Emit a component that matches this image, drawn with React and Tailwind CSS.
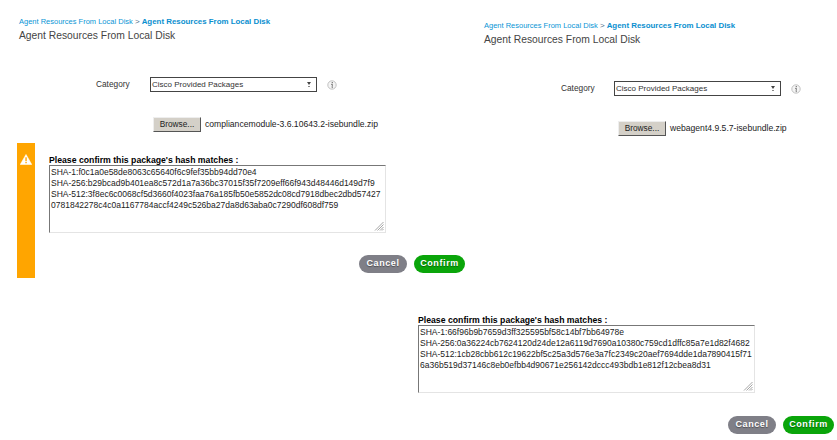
import React from 'react';

const LEFT_HASHES = [
    "SHA-1:f0c1a0e58de8063c65640f6c9fef35bb94dd70e4",
    "SHA-256:b29bcad9b401ea8c572d1a7a36bc37015f35f7209eff66f943d48446d149d7f9",
    "SHA-512:3f8ec6c0068cf5d3660f4023faa76a185fb50e5852dc08cd7918dbec2dbd57427",
    "0781842278c4c0a1167784accf4249c526ba27da8d63aba0c7290df608df759",
]

const RIGHT_HASHES = [
    "SHA-1:66f96b9b7659d3ff325595bf58c14bf7bb64978e",
    "SHA-256:0a36224cb7624120d24de12a6119d7690a10380c759cd1dffc85a7e1d82f4682",
    "SHA-512:1cb28cbb612c19622bf5c25a3d576e3a7fc2349c20aef7694dde1da7890415f71",
    "6a36b519d37146c8eb0efbb4d90671e256142dccc493bdb1e812f12cbea8d31",
]

/* Circled "i" next to the select */
const InfoIcon = () => (
    <svg width="10" height="10" viewBox="0 0 10 10" className="shrink-0">
        <circle cx="5" cy="5" r="4.2" fill="#f4f4f4" stroke="#b5b5b5" strokeWidth="0.8" />
        <rect x="4.7" y="2" width="1.2" height="1.2" fill="#777" />
        <path d="M4 4.4h1.5L5 7.6h.8" fill="none" stroke="#777" strokeWidth="0.9" />
    </svg>
)

const WarningIcon = () => (
    <svg width="12" height="11" viewBox="0 0 13 12">
        <path d="M6.5 0.5 L12.8 11.5 H0.2 Z" fill="#fff" stroke="#fff" strokeLinejoin="round" strokeWidth="0.6" />
        <rect x="5.8" y="3.6" width="1.5" height="4.2" fill="#ffa500" />
        <rect x="5.8" y="8.6" width="1.5" height="1.5" fill="#ffa500" />
    </svg>
)

const ResizeGrip = () => (
    <svg width="10" height="10" viewBox="0 0 10 10" className="absolute bottom-px right-px">
        <path d="M9.5 1L1 9.5M9.5 3.5L3.5 9.5M9.5 6L6 9.5M9.5 8L8 9.5" stroke="#8f8f8f" strokeWidth="0.8" />
    </svg>
)

const Header = () => (
    <>
        <p className="text-[7.5px] leading-[10px] text-[#0a96d6] whitespace-nowrap">
            Agent Resources From Local Disk <span className="text-[8px] text-[#4a6f8a]">&gt;</span> <b className="text-[7.9px] text-[#0a8fcf]">Agent Resources From Local Disk</b>
        </p>
        <h1 className="mt-[2px] text-[10.3px] leading-[14px] text-[#444] whitespace-nowrap">Agent Resources From Local Disk</h1>
    </>
)

const UploadForm = ({ archivo, labelWidth, browseIndent }) => (
    <>
        <div className="mt-[34px] flex items-center h-[15px]">
            <span className={`text-[8.3px] leading-[10px] -mt-[2px] text-[#333] ml-[77px] ${labelWidth}`}>Category</span>
            <div className="w-[166.5px] h-[15px] border border-[#444] bg-white flex items-center justify-between pl-[1px] pr-[5px]">
                <span className="text-[8px] text-[#333] whitespace-nowrap">Cisco Provided Packages</span>
                <span className="flex flex-col items-center gap-px">
                    <span className="w-0 h-0 border-x-[2.5px] border-x-transparent border-t-[3px] border-t-[#444]"></span>
                    <span className="w-[2px] h-px bg-[#888]"></span>
                </span>
            </div>
            <span className="ml-[10px]"><InfoIcon /></span>
        </div>
        <div className={`mt-[25px] flex items-center h-[15px] ${browseIndent}`}>
            <button className="w-[48px] h-[15px] bg-[#d4d0c8] border border-t-[#eee] border-l-[#eee] border-r-[#555] border-b-[#555] text-[8.3px] leading-none text-[#222]">Browse...</button>
            <span className="ml-[4px] text-[8.6px] text-[#222] whitespace-nowrap">{archivo}</span>
        </div>
    </>
)

const HashBox = ({ hashes }) => (
    <div>
        <p className="text-[8.7px] leading-[10px] font-bold text-black whitespace-nowrap">Please confirm this package's hash matches :</p>
        <div className="relative w-[337px] h-[68px] bg-white border border-[#e4e4e4] border-t-[#777] border-l-[#777] pl-[1px] pt-px">
            {hashes.map((linea) => (
                <div key={linea} className="text-[8.5px] leading-[11px] text-[#222] whitespace-nowrap">{linea}</div>
            ))}
            <ResizeGrip />
        </div>
    </div>
)

const Botones = () => (
    <div className="flex gap-[7px]">
        <button className="w-[48px] h-[18px] rounded-full bg-[#7f7f87] text-white text-[9px] font-bold tracking-[0.6px] [text-shadow:0_1px_1px_#0006]">Cancel</button>
        <button className="w-[51px] h-[18px] rounded-full bg-[#0aa50a] text-white text-[9px] font-bold tracking-[0.6px] [text-shadow:0_1px_1px_#0006]">Confirm</button>
    </div>
)

export default function App() {
    return (
        <div className="w-[837px] h-[440px] bg-white overflow-hidden font-['Liberation_Sans',Arial,sans-serif]">
            {/* Parte superior, dos formularios */}
            <div className="flex h-[143px]">
                <div className="w-[484px] pl-[19px] pt-[17px]">
                    <Header />
                    <UploadForm archivo="compliancemodule-3.6.10643.2-isebundle.zip" labelWidth="w-[54px]" browseIndent="ml-[134px]" />
                </div>
                <div className="flex-1 pt-[21px]">
                    <Header />
                    <UploadForm archivo="webagent4.9.5.7-isebundle.zip" labelWidth="w-[53px]" browseIndent="ml-[134px]" />
                </div>
            </div>

            {/* Aviso naranja con el hash */}
            <div className="flex h-[135px] pl-[17px]">
                <div className="w-[18px] bg-[#ffa500] flex justify-center pt-[11px]">
                    <div className="h-[11px]"><WarningIcon /></div>
                </div>
                <div className="pl-[14px] pt-[12px]">
                    <HashBox hashes={LEFT_HASHES} />
                    <div className="mt-[22px] ml-[310px]">
                        <Botones />
                    </div>
                </div>
            </div>

            {/* Hash del segundo paquete */}
            <div className="pl-[418px] mt-[37px]">
                <HashBox hashes={RIGHT_HASHES} />
                <div className="mt-[23px] ml-[310px]">
                    <Botones />
                </div>
            </div>
        </div>
    )
}
